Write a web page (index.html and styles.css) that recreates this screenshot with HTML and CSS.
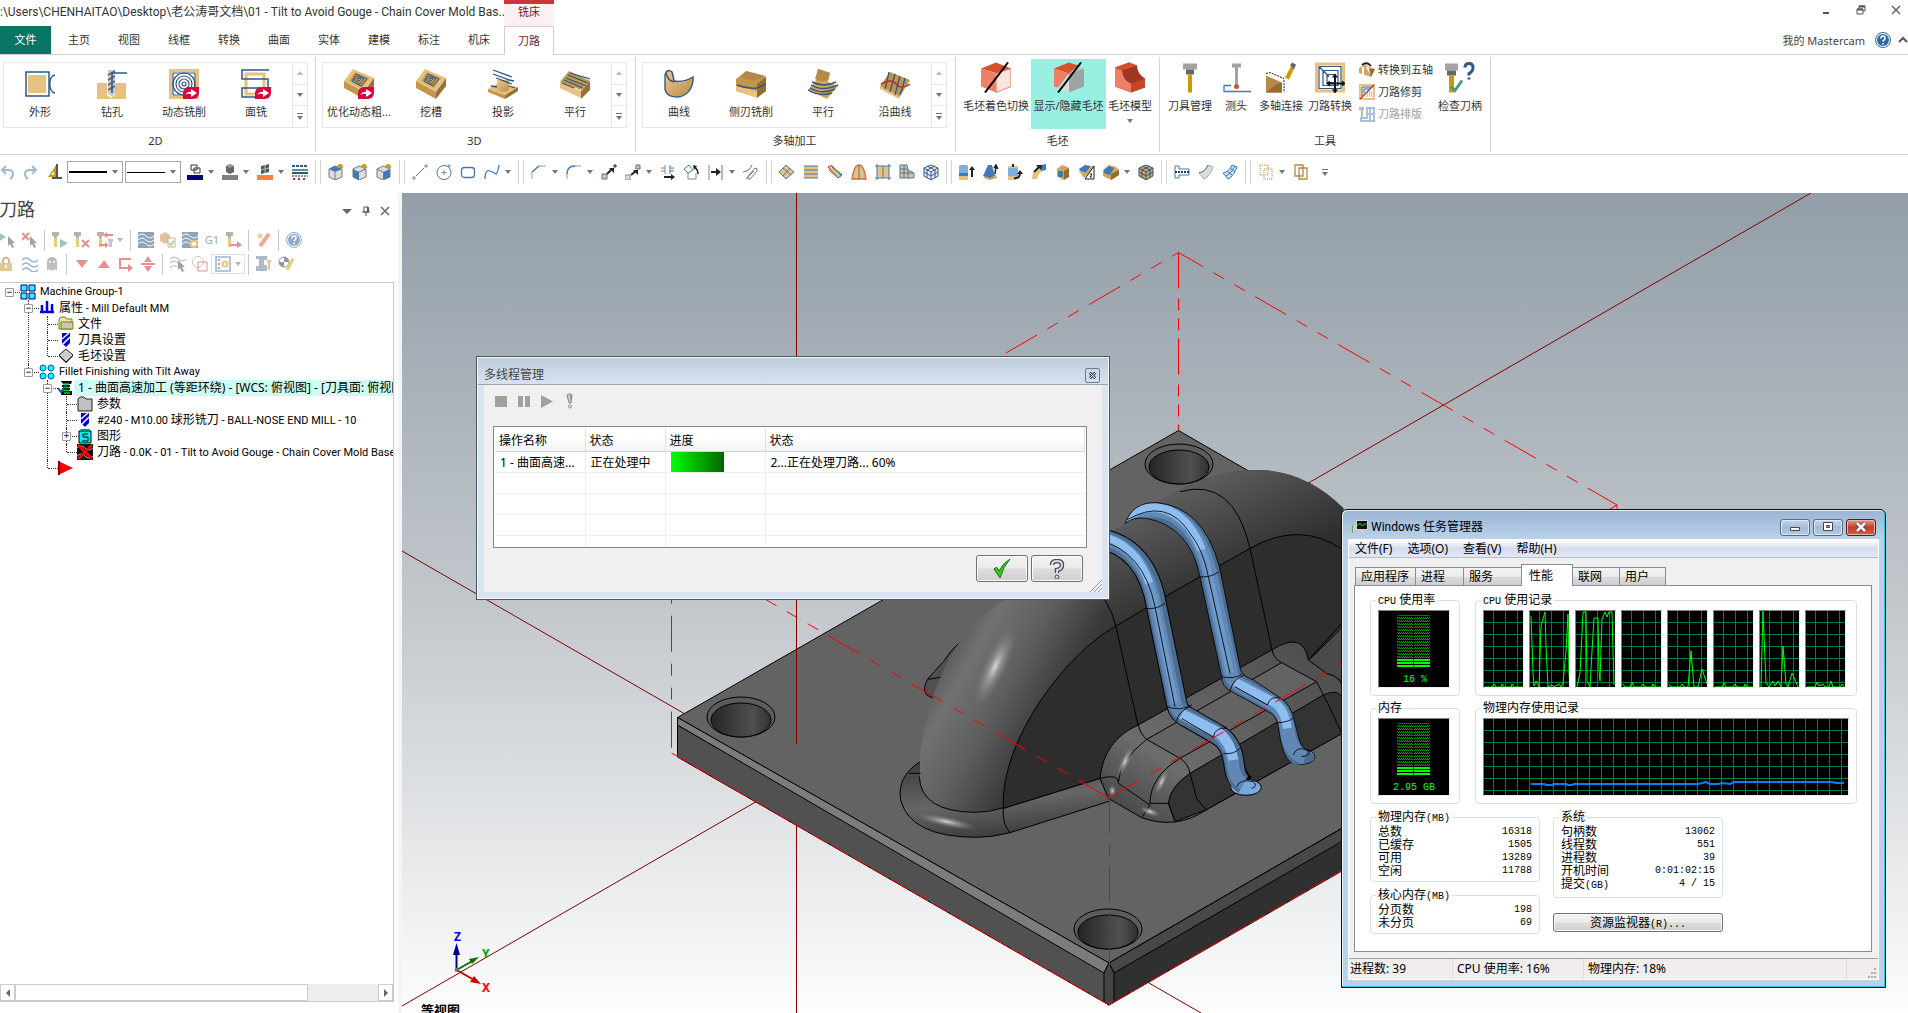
FILE: index.html
```html
<!DOCTYPE html>
<html lang="zh-CN">
<head>
<meta charset="utf-8">
<title>Mastercam</title>
<link rel="stylesheet" href="styles.css">
</head>
<body>
<svg class="defs" aria-hidden="true">
<defs>
<linearGradient id="gTan" x1="0" y1="0" x2="1" y2="1"><stop offset="0" stop-color="#f0c987"/><stop offset="1" stop-color="#b98d4a"/></linearGradient>
<!-- large ribbon icons, 30 x 30 -->
<symbol id="b-contour" viewBox="0 0 30 30"><path d="M1 3h23v24H1z" fill="#fff" stroke="#2f5882" stroke-width="1.5"/><path d="M3 6h18v18H3z" fill="#e8c080"/><path d="M30 6c-7 1-7 17 0 18" fill="none" stroke="#2f5882" stroke-width="1.5"/></symbol>
<symbol id="b-drill" viewBox="0 0 30 30"><path d="M0 14h10v12l4 3 4-3V14h11v16H0z" fill="#e8c080"/><path d="M11 1h7v23l-3 4-4-4z" fill="#c9c9c9"/><path d="M11 6l7-4M11 11l7-4M11 16l7-4M11 21l7-4" stroke="#666" stroke-width="2"/><path d="M30 4H15v20" fill="none" stroke="#2f5882" stroke-width="1.5"/></symbol>
<symbol id="go" viewBox="0 0 16 12"><path d="M0 6a6 6 0 0 1 6-6h10v6a6 6 0 0 1-6 6H0z" fill="#d9083c"/><path d="M2 8q3-4 6-3V2l6 4-6 4V7Q5 6 2 8z" fill="#fff"/></symbol>
<symbol id="b-dyn" viewBox="0 0 30 30"><path d="M0 0h30v30H0z" fill="#e8c080"/><path d="M3 3h24v24H3z" fill="#fff"/><g fill="none" stroke="#2f5882" stroke-width="1.2"><circle cx="15" cy="15" r="2"/><circle cx="15" cy="15" r="5"/><circle cx="15" cy="15" r="8"/><circle cx="15" cy="15" r="11"/><path d="M4 4h22v22H4z"/></g><use href="#go" x="14" y="18" width="16" height="12"/></symbol>
<symbol id="b-face" viewBox="0 0 30 30"><path d="M5 5h18v20H5z" fill="none" stroke="#e8c080" stroke-width="3"/><path d="M28 1H1v9h26v9H1v9h15" fill="none" stroke="#2f5882" stroke-width="1.5"/><use href="#go" x="14" y="18" width="16" height="12"/></symbol>
<symbol id="b-pocket" viewBox="0 0 30 30"><path d="M9 0l21 9-10 14L0 12z" fill="#e8c080"/><path d="M0 12l20 11v7L0 19z" fill="#c4954c"/><path d="M30 9v8L20 30v-7z" fill="#9a7135"/><path d="M11 3l14 6-7 10L5 12z" fill="#c99d57"/><g fill="none" stroke="#2f5882"><path d="M12 5l11 5-6 7-9-5z"/><path d="M13 7l7 3-4 5-6-4z"/><path d="M14 9l3 1-2 2-2-1z"/></g></symbol>
<symbol id="b-opti" viewBox="0 0 30 30"><use href="#b-pocket" width="30" height="30"/><use href="#go" x="14" y="18" width="16" height="12"/></symbol>
<symbol id="b-proj" viewBox="0 0 30 30"><path d="M0 20l10-6 20 4-13 8z" fill="#e8c080"/><path d="M0 20l17 6v4L0 23z" fill="#c4954c"/><path d="M17 26l13-8v4l-13 8z" fill="#9a7135"/><path d="M9 11v10q6 4 12 0V11z" fill="url(#gTan)"/><path d="M5 1l19 7M5 5l19 7M8 9l16 6M21 11l5 1M9 18l-6-1M21 17l6 2" stroke="#2f5882" stroke-width="1.3"/></symbol>
<symbol id="b-par" viewBox="0 0 30 30"><path d="M9 2l21 10-9 9L0 13z" fill="#c4954c"/><path d="M0 13l21 9v7L0 19z" fill="#e8c080"/><path d="M30 12v9l-9 9v-8z" fill="#9a7135"/><path d="M10 4l20 6M8 6l20 8M6 9l20 8M4 11l19 8M2 14l12 5" stroke="#2f5882" stroke-width="1.3"/></symbol>
<symbol id="b-curve" viewBox="0 0 30 30"><path d="M2 3Q8-1 10 6l1 7q8 2 18-5Q30 24 16 27 3 29 1 20z" fill="url(#gTan)"/><path d="M1 20V6Q3-1 8 3l2 9q9 2 19-4v4Q27 26 14 28 2 28 1 20M2 4q2 8 8 9" fill="none" stroke="#2f5882" stroke-width="1.4"/></symbol>
<symbol id="b-swarf" viewBox="0 0 30 30"><path d="M10 2l20 6v14l-9 6L0 22V10z" fill="#c4954c"/><path d="M0 17l21 5v7L0 22z" fill="#e8c080"/><path d="M21 15l9-7v14l-9 7z" fill="#946b30"/><path d="M5 8q10 6 20 1l5-2-20-5z" fill="#b48848"/><path d="M1 16q12 4 20 3l9-4" fill="none" stroke="#2f5882" stroke-width="1.5"/></symbol>
<symbol id="b-mpar" viewBox="0 0 30 30"><path d="M10 0q8 2 12 4l-2 9 10 4-11 13L0 21l9-11z" fill="#d1a460"/><path d="M10 0l12 4-2 7q-7 3-13-1z" fill="#b58a49"/><path d="M4 13q12 6 24 0M3 16q12 7 27 0M2 19q12 7 25 1M0 21q12 7 24 3" fill="none" stroke="#2f5882" stroke-width="1.4"/></symbol>
<symbol id="b-along" viewBox="0 0 30 30"><path d="M10 3l20 8-11 18L0 17z" fill="#bf9250"/><path d="M0 17l19 10v3L0 20z" fill="#e8c080"/><path d="M9 3q-2 10-4 17M15 5q-3 10-5 18M20 7q-3 11-5 19M25 9q-2 10-5 17" fill="none" stroke="#2f5882" stroke-width="1.3"/><path d="M1 15q10-6 15 0t14 0" fill="none" stroke="#b4342b" stroke-width="1.5"/></symbol>
<symbol id="b-shade" viewBox="0 0 30 30"><path d="M0 6l15-6 15 6-14 5z" fill="#d9502d"/><path d="M0 6l15 5v19L0 24z" fill="#f08065"/><path d="M15 11l15-5v18l-15 6z" fill="#fce4de" stroke="#f08065"/><path d="M4 30L27 0" stroke="#000" stroke-width="2"/></symbol>
<symbol id="b-show" viewBox="0 0 30 30"><path d="M0 6l15-6 15 6-14 5z" fill="#c5cad0"/><path d="M0 6l15-6 9 3-9 8z" fill="#d9502d"/><path d="M0 6l15 5-11 14-4-1z" fill="#f08065"/><path d="M15 11l15-5v18l-15 6z" fill="#a0a3a6"/><path d="M15 12v18l-10-4z" fill="#dcdcdc"/><path d="M4 30L27 0" stroke="#000" stroke-width="2"/></symbol>
<symbol id="b-model" viewBox="0 0 30 30"><path d="M0 5L14 0l8 3q0 8 8 13v9l-14 5L0 24z" fill="#9e3720"/><path d="M0 5l7 3q1 10 9 13v9L0 24z" fill="#f08065"/><path d="M0 5L14 0l8 3-15 5z" fill="#d9502d"/><path d="M16 21l14-5v9l-14 5z" fill="#c4452a"/></symbol>
<symbol id="b-tool" viewBox="0 0 30 30"><path d="M8 1h14v6H8z" fill="#a3a3a3"/><path d="M11 7h8v5h-8z" fill="#666"/><path d="M13 12h4v18h-4z" fill="#cc9900"/></symbol>
<symbol id="b-probe" viewBox="0 0 30 30"><path d="M11 1h9v4h-3v17h-3V5h-3z" fill="#a3a3a3"/><circle cx="15.500" cy="24" r="2.500" fill="#d9502d"/><path d="M10 23H3v6h27" fill="none" stroke="#3f7bb5" stroke-width="1.3"/></symbol>
<symbol id="b-multi" viewBox="0 0 30 30"><path d="M0 13l16 7v10H0z" fill="#b58a49"/><path d="M0 30l10-8 6-2v10z" fill="#946b30"/><path d="M0 11l4-1 14 6v14" fill="none" stroke="#222" stroke-dasharray="2 1"/><path d="M19 15l6-11 3 2-5 11z" fill="#cc9900"/><path d="M24 3l2-3 4 2-2 5z" fill="#666"/></symbol>
<symbol id="b-trans" viewBox="0 0 30 30"><path d="M0 0h30v30H0z" fill="#e8c080"/><path d="M3 3h24v24H3z" fill="#fff"/><g fill="none" stroke="#2f5882" stroke-width="1.2"><path d="M4 4h22v22H4zM8 8h15v15H8zM12 12h8v8h-8zM4 4l10 10"/></g><path d="M20 13v16M13 21h16" stroke="#111" stroke-width="2"/><path d="M20 11l3 4h-6zM20 31l3-4h-6zM11 21l4-3v6zM31 21l-4-3v6z" fill="#111"/></symbol>
<symbol id="b-check" viewBox="0 0 30 30"><path d="M0 1h13v7H0z" fill="#a3a3a3"/><path d="M2 8h9v5H2z" fill="#666"/><path d="M4 13h5v17H4z" fill="#cc9900"/><path d="M6 24l4 4 7-10" fill="none" stroke="#4b9a7d" stroke-width="3"/><path d="M20 5q0-4 4-4t4 4-4 6v2M24 15v2" fill="none" stroke="#2f5882" stroke-width="3"/></symbol>
<!-- small icons, 16 x 16 -->
<symbol id="s-five" viewBox="0 0 16 16"><path d="M0 6l6-3 10 4-4 8-12-4z" fill="#d1a460"/><path d="M3 3q5-4 9 1" fill="none" stroke="#222" stroke-width="2"/><path d="M4 5v8M8 5l4 7" stroke="#fff" stroke-width="2"/><path d="M10 7l6 0-4 8z" fill="#946b30"/></symbol>
<symbol id="s-trim" viewBox="0 0 16 16"><path d="M0 0h16v16H0z" fill="#e8c080"/><path d="M2 2h12v12H2z" fill="#fff"/><path d="M3 12V3h10M5 9V5h5" fill="none" stroke="#2f5882"/><path d="M6 12h7M8 10h5M10 8h3" stroke="#888" stroke-dasharray="1 1"/><path d="M1 15L15 1" stroke="#b4342b" stroke-width="1.500"/></symbol>
<symbol id="s-nest" viewBox="0 0 16 16"><path d="M0 1h5v3H4v7H2V4H0z" fill="#bbb"/><path d="M8 2h7v13H2v-3h6zM8 8h7M11 3v11" fill="none" stroke="#a9c1dc" stroke-width="2"/></symbol>
<symbol id="undo" viewBox="0 0 16 16"><path d="M3 6h6q5 0 5 4 0 3-3 5M7 2L3 6l4 4" fill="none" stroke="#9cbbd9" stroke-width="2"/></symbol>
<symbol id="redo" viewBox="0 0 16 16"><path d="M13 6H7q-5 0-5 4 0 3 3 5M9 2l4 4-4 4" fill="none" stroke="#9cbbd9" stroke-width="2"/></symbol>
<symbol id="tri" viewBox="0 0 16 16"><path d="M9 1v12H1zM7 7v4H4z" fill="#c99a12" fill-rule="evenodd"/><path d="M10 0v13M5 14h10" stroke="#555" stroke-width="2"/></symbol>
<symbol id="c1" viewBox="0 0 16 16"><path d="M4 1h6v5H4zM7 4h6v5H7z" fill="none" stroke="#333"/><path d="M0 11h16v5H0z" fill="#000080"/></symbol>
<symbol id="c2" viewBox="0 0 16 16"><path d="M4 2l4-2 4 2v6l-4 2-4-2z" fill="#666"/><path d="M4 2l4 2 4-2-4-2z" fill="#999"/><path d="M0 11h16v5H0z" fill="#808080"/></symbol>
<symbol id="c3" viewBox="0 0 16 16"><path d="M4 2l8-2v8l-8 2z" fill="#555"/><path d="M8 1v8M4 6l8-2" stroke="#bbb"/><path d="M0 11h16v5H0z" fill="#ff8040"/></symbol>
<symbol id="mesh" viewBox="0 0 16 16"><path d="M0 2h16" stroke="#2f5882" stroke-width="2" stroke-dasharray="3 1"/><path d="M0 6h16" stroke="#4b9a7d" stroke-width="2"/><path d="M0 9h16" stroke="#2f5882" stroke-width="2"/><path d="M0 12h16" stroke="#222" stroke-dasharray="2 1"/><path d="M1 15h14" stroke="#b4342b" stroke-width="2" stroke-dasharray="2 3"/></symbol>
<symbol id="cubeT" viewBox="0 0 16 16"><path d="M1 5l6-3 7 3v8l-7 3-6-3z" fill="#ddd" stroke="#777"/><path d="M1 5l6-3 7 3-7 3z" fill="#3f7bb5"/><path d="M7 8v8" stroke="#777"/><path d="M9 4q0-4 3-4t3 4z" fill="#c99a12"/></symbol>
<symbol id="cubeL" viewBox="0 0 16 16"><path d="M1 5l6-3 7 3v8l-7 3-6-3z" fill="#ddd" stroke="#777"/><path d="M1 5l6 3v8l-6-3z" fill="#3f7bb5"/><path d="M7 8l7-3" stroke="#777"/><path d="M9 4q0-4 3-4t3 4z" fill="#c99a12"/></symbol>
<symbol id="cubeR" viewBox="0 0 16 16"><path d="M1 5l6-3 7 3v8l-7 3-6-3z" fill="#ddd" stroke="#777"/><path d="M7 8l7-3v8l-7 3z" fill="#3f7bb5"/><path d="M7 8L1 5" stroke="#777"/><path d="M9 4q0-4 3-4t3 4z" fill="#c99a12"/></symbol>
<symbol id="line" viewBox="0 0 16 16"><path d="M4 12L12 4" stroke="#3f7bb5"/><path d="M2 12v4M0 14h4M14 0v4M12 2h4" stroke="#888"/></symbol>
<symbol id="circ" viewBox="0 0 16 16"><circle cx="8" cy="8.500" r="7" fill="none" stroke="#3f7bb5"/><path d="M8 6v5M5.500 8.500h5M13 0v4M11 2h4" stroke="#888"/></symbol>
<symbol id="rect" viewBox="0 0 16 16"><rect x="1.500" y="3.500" width="13" height="10" rx="3" fill="none" stroke="#3f7bb5" stroke-width="1.300"/></symbol>
<symbol id="spl" viewBox="0 0 16 16"><path d="M1 15Q1 5 6 7t6 3q2-2 3-9" fill="none" stroke="#3f7bb5" stroke-width="1.300"/></symbol>
<symbol id="cham" viewBox="0 0 16 16"><path d="M1 15V8l7-6h7" fill="none" stroke="#999"/><path d="M1 8l7-6" stroke="#3f7bb5" stroke-width="1.300"/></symbol>
<symbol id="fil" viewBox="0 0 16 16"><path d="M1 15v-5q0-8 8-8h6" fill="none" stroke="#999"/><path d="M1 10q0-8 8-8" fill="none" stroke="#3f7bb5" stroke-width="1.300"/></symbol>
<symbol id="mv1" viewBox="0 0 16 16"><path d="M1 10h5v5H1z" fill="#e8c080" stroke="#3f7bb5"/><path d="M6 10l5-5" stroke="#222" stroke-width="2"/><path d="M8 4h5v5z" fill="#222"/><path d="M14 0v4M12 2h4" stroke="#222"/></symbol>
<symbol id="mv2" viewBox="0 0 16 16"><path d="M0 11h5v5H0z" fill="#ddd" stroke="#888"/><path d="M6 11l5-4" stroke="#222" stroke-width="2"/><path d="M8 6h5v5z" fill="#222"/><path d="M11 1h4v4h-4z" fill="#e8c080" stroke="#3f7bb5"/></symbol>
<symbol id="off" viewBox="0 0 16 16"><path d="M5 1v9M1 4h4M1 7h4" stroke="#888" fill="none"/><path d="M10 1v9M10 4h4M10 7h4" stroke="#3f7bb5"/><path d="M4 13h8" stroke="#222" stroke-width="2"/><path d="M11 10l4 3-4 3z" fill="#222"/></symbol>
<symbol id="rot" viewBox="0 0 16 16"><path d="M0 5l5-4 4 5-5 3z" fill="none" stroke="#3f7bb5"/><path d="M4 9v6h8V9" fill="none" stroke="#888"/><path d="M10 3q4 2 4 7" fill="none" stroke="#222" stroke-width="1.500"/><path d="M9 1l4 1-3 4z" fill="#222"/></symbol>
<symbol id="ext" viewBox="0 0 16 16"><path d="M1 1v15" stroke="#888"/><path d="M14 1v15" stroke="#3f7bb5"/><path d="M3 8h6" stroke="#222" stroke-width="2"/><path d="M8 4l5 4-5 4z" fill="#222"/></symbol>
<symbol id="clip" viewBox="0 0 16 16"><path d="M0 8q7-1 9-7" fill="none" stroke="#3f7bb5"/><path d="M3 15l9-11q3 0 2 3l-7 8q-3 1-2-2l6-6" fill="none" stroke="#777"/></symbol>
<symbol id="p1" viewBox="0 0 16 16"><path d="M7 1l8 7-8 7-7-7z" fill="#e8c080" stroke="#3f7bb5"/><path d="M4 4l8 7M11 4l-7 8" stroke="#3f7bb5"/></symbol>
<symbol id="p2" viewBox="0 0 16 16"><path d="M1 2h14v12H1z" fill="#e8c080"/><path d="M1 2h14M1 6h14M1 10h14M1 14h14" stroke="#3f7bb5"/></symbol>
<symbol id="p3" viewBox="0 0 16 16"><path d="M1 3q4-3 6 1l8 7-4 3z" fill="#e8c080" stroke="#b4342b"/><path d="M2 6l9 8M5 3l9 8" stroke="#3f7bb5"/></symbol>
<symbol id="p4" viewBox="0 0 16 16"><path d="M1 15Q3 1 8 1t7 14z" fill="#e8c080" stroke="#d9663d" stroke-width="1.300"/><path d="M8 1v14" stroke="#3f7bb5"/></symbol>
<symbol id="p5" viewBox="0 0 16 16"><path d="M2 2h12v12H2z" fill="#e8c080"/><path d="M2 0v16M14 0v16M0 2h16M0 14h16M8 2v12" stroke="#3f7bb5"/></symbol>
<symbol id="p6" viewBox="0 0 16 16"><path d="M1 1h7l1 5 6 3v5H1z" fill="#e8c080" stroke="#3f7bb5"/><path d="M1 5h8M1 9h13M5 1v13M9 6v8" stroke="#3f7bb5"/></symbol>
<symbol id="p7" viewBox="0 0 16 16"><path d="M1 4l7-3 7 3v8l-7 4-7-4z" fill="#eef" stroke="#2f5882"/><path d="M1 4l7 4 7-4M8 8v8M4 2l8 4v8M12 2L4 6v8M1 8l7 4 7-4" fill="none" stroke="#2f5882"/></symbol>
<symbol id="t1" viewBox="0 0 16 16"><path d="M0 2q5-2 9 0v13H0z" fill="#3f7bb5"/><path d="M0 2q5-2 9 0v7H0z" fill="#7fb0e0"/><path d="M0 12h9v4H0z" fill="#e8c080"/><path d="M13 5v8" stroke="#222" stroke-width="2"/><path d="M10 6l3-4 3 4z" fill="#222"/></symbol>
<symbol id="t2" viewBox="0 0 16 16"><path d="M5 1h4l3 11-6 3-6-3z" fill="#3f7bb5"/><path d="M1 12l6 2 6-3 1 3-7 2-6-2z" fill="#d1a460"/><path d="M12 10l1-8M11 4l2-3 2 4" stroke="#222" stroke-width="1.500"/></symbol>
<symbol id="t3" viewBox="0 0 16 16"><path d="M1 3h10v11H1z" fill="#7fb0e0"/><path d="M1 12h8v4H1zM1 2h10v2H1z" fill="#e8c080"/><path d="M6 0v3M7 14q6 1 6-5" fill="none" stroke="#222" stroke-width="2"/><path d="M10 10l3-4 3 4z" fill="#222"/></symbol>
<symbol id="t4" viewBox="0 0 16 16"><path d="M1 15q0-9 8-11l3 3q-5 2-6 8z" fill="#e8c080"/><path d="M10 1l5-1v6l-5 1z" fill="#3f7bb5"/><path d="M3 8l5-5" fill="none" stroke="#222" stroke-width="2"/><path d="M5 1l6 0-1 5z" fill="#222"/></symbol>
<symbol id="t5" viewBox="0 0 16 16"><path d="M2 5l5-4 6 2 1 9-6 4-6-4z" fill="#d1a460"/><path d="M9 7l5-3v9l-5 3z" fill="#946b30"/><path d="M3 7h5v6H3z" fill="#3f7bb5"/></symbol>
<symbol id="t6" viewBox="0 0 16 16"><path d="M0 5l6-4 6 1-5 7-6-2z" fill="#3f7bb5"/><path d="M0 7l6 2 8-8v4L5 14z" fill="#d1a460"/><path d="M15 2v13H6z" fill="#fff" stroke="#222"/><path d="M11 10h2l-2 3h2" fill="none" stroke="#222"/></symbol>
<symbol id="t7" viewBox="0 0 16 16"><path d="M0 6l6-5 7 2 3 3v5l-8 5-8-4z" fill="#d1a460"/><path d="M1 6l5-4 5 2-4 7-6-2z" fill="#3f7bb5"/><path d="M8 10l8-4v5l-8 5z" fill="#946b30"/></symbol>
<symbol id="t8" viewBox="0 0 16 16"><path d="M1 4l7-3 7 3v8l-7 4-7-4z" fill="#d1a460" stroke="#2f5882"/><path d="M1 4l7 4 7-4M8 8v8M4 2l8 4v8M12 2L4 6v8M1 8l7 4 7-4" fill="none" stroke="#2f5882"/></symbol>
<symbol id="m1" viewBox="0 0 16 16"><path d="M1 2v12h4v-3h10V5H5V2z" fill="#fff" stroke="#3f7bb5"/><path d="M1 8h14" stroke="#333" stroke-width="2" stroke-dasharray="2 1"/></symbol>
<symbol id="m2" viewBox="0 0 16 16"><path d="M1 9q6-1 9-8l5 2q-3 9-9 12z" fill="#ddd" stroke="#aaa"/><path d="M1 9q6-1 9-8" fill="none" stroke="#3f7bb5"/></symbol>
<symbol id="m3" viewBox="0 0 16 16"><path d="M1 9q6-1 9-8l5 2q-3 9-9 12z" fill="#cfe1f4" stroke="#3f7bb5"/><path d="M4 12q6-3 9-10M5 7l5 4M8 4l5 4" fill="none" stroke="#3f7bb5"/></symbol>
<symbol id="g1" viewBox="0 0 16 16"><path d="M2 1h8v10H2zM6 5h8v10H6z" fill="none" stroke="#b58a49" stroke-dasharray="1 1"/></symbol>
<symbol id="g2" viewBox="0 0 16 16"><path d="M2 1h8v11H2zM6 4h8v11H6z" fill="none" stroke="#b58a49" stroke-width="1.300"/></symbol>
<!-- panel toolbar -->
<symbol id="cur" viewBox="0 0 16 16"><path d="M8 4v10l2-2 2 4 2-1-2-4h3z" fill="#555"/></symbol>
<symbol id="n1" viewBox="0 0 16 16"><path d="M-2 0l8 5-8 5z" fill="#4b9a7d"/><use href="#cur" width="16" height="16"/></symbol>
<symbol id="n2" viewBox="0 0 16 16"><path d="M0 1l7 7M7 1L0 8" stroke="#d33" stroke-width="2"/><use href="#cur" width="16" height="16"/></symbol>
<symbol id="tl" viewBox="0 0 16 16"><path d="M0 0h7v4H5v2H2V4H0z" fill="#777"/><path d="M2 6h3v9H2z" fill="#d9a400"/></symbol>
<symbol id="n3" viewBox="0 0 16 16"><use href="#tl" width="16" height="16"/><path d="M8 7l8 4-8 5z" fill="#4b9a7d"/></symbol>
<symbol id="n4" viewBox="0 0 16 16"><use href="#tl" width="16" height="16"/><path d="M8 8l7 7M15 8l-7 7" stroke="#d33" stroke-width="2"/></symbol>
<symbol id="n5" viewBox="0 0 16 16"><use href="#tl" width="16" height="16"/><path d="M16 3H8M2 13h7" stroke="#d33" stroke-width="2"/><path d="M6 3l4-3v6zM12 13L8 10v6z" fill="#d33"/><path d="M11 7h5v3h-1v5h-3v-5h-1z" fill="#999"/></symbol>
<symbol id="n6" viewBox="0 0 16 16"><path d="M0 0h16v16H0z" fill="#2f5882"/><path d="M0 4q4-4 8 0t8 0M0 8q4-4 8 0t8 0M0 12q4-4 8 0t8 0" fill="none" stroke="#fff"/></symbol>
<symbol id="n7" viewBox="0 0 16 16"><path d="M0 3l5-3 5 3v6l-5 3-5-3z" fill="#c4954c"/><path d="M8 6h7v9H8z" fill="#fff" stroke="#a56a2c"/><path d="M9 11l2 2 3-4" fill="none" stroke="#4b9a7d" stroke-width="1.500"/></symbol>
<symbol id="n8" viewBox="0 0 16 16"><use href="#n6" width="16" height="16"/><circle cx="12" cy="12" r="3" fill="#fff" stroke="#d39a20" stroke-width="2"/></symbol>
<symbol id="n10" viewBox="0 0 16 16"><use href="#tl" width="16" height="16"/><path d="M4 13h9" stroke="#d33" stroke-width="2"/><path d="M11 9l5 4-5 3z" fill="#d33"/></symbol>
<symbol id="n11" viewBox="0 0 16 16"><path d="M13 2L4 14" stroke="#d9663d" stroke-width="4"/><path d="M1 4h6M4 1v6M2 2l4 4M6 2L2 6" stroke="#d9a400"/></symbol>
<symbol id="help" viewBox="0 0 16 16"><circle cx="8" cy="8" r="7.500" fill="#fff" stroke="#2f66a5"/><circle cx="8" cy="8" r="6" fill="#2f66a5"/><path d="M6 6.500q0-2.500 2-2.500t2 2-2 3v.5M8 11v1.500" fill="none" stroke="#fff" stroke-width="1.500"/></symbol>
<symbol id="k1" viewBox="0 0 16 16"><path d="M3 7V4q3-5 6 0v3" fill="none" stroke="#a87c30" stroke-width="2"/><path d="M0 7h12v8H0z" fill="#c99a3c"/><path d="M6 9v3" stroke="#fff" stroke-width="2"/></symbol>
<symbol id="k2" viewBox="0 0 16 16"><path d="M0 4q4-4 8 0t8 0M0 9q4-4 8 0t8 0M0 14q4-4 8 0t8 0" fill="none" stroke="#3f7bb5" stroke-width="1.500"/></symbol>
<symbol id="k3" viewBox="0 0 16 16"><path d="M3 15V6q0-5 5-5t5 5v9l-2-2-2 2-1-2-1 2-2-2z" fill="#888"/><path d="M6 5v2M10 5v2" stroke="#fff" stroke-width="1.500"/></symbol>
<symbol id="k4" viewBox="0 0 16 16"><path d="M2 4h12l-6 8z" fill="#d33"/></symbol>
<symbol id="k5" viewBox="0 0 16 16"><path d="M2 12h12L8 4z" fill="#d33"/></symbol>
<symbol id="k6" viewBox="0 0 16 16"><path d="M13 3H2v9h9" fill="none" stroke="#d33" stroke-width="2"/><path d="M10 8l5 4-5 4z" fill="#d33"/></symbol>
<symbol id="k7" viewBox="0 0 16 16"><path d="M1 8h14" stroke="#d33" stroke-width="2"/><path d="M4 6h8L8 0zM4 10h8l-4 6z" fill="#d33"/></symbol>
<symbol id="k8" viewBox="0 0 16 16"><path d="M0 3q4-4 8 0t8 0M0 7q4-4 8 0M0 12q3-4 7-1" fill="none" stroke="#678"/><use href="#cur" width="16" height="16"/></symbol>
<symbol id="k9" viewBox="0 0 16 16"><circle cx="6" cy="6" r="5.500" fill="none" stroke="#999"/><path d="M6 6h9v9H6z" fill="none" stroke="#d33"/></symbol>
<symbol id="k10" viewBox="0 0 16 16"><path d="M1 1h14v14H1z" fill="#fff" stroke="#3f7bb5" stroke-width="1.500"/><path d="M4 3v2M4 7v2M4 11v2" stroke="#d33" stroke-width="2"/><circle cx="10" cy="8" r="2.500" fill="none" stroke="#d39a20" stroke-width="2"/></symbol>
<symbol id="k11" viewBox="0 0 16 16"><path d="M0 0h11v4H8v5h3v6H0v-5h3V3H0z" fill="#6c8197"/><path d="M11 4h4v3h-1v7h-2V7h-1z" fill="#c99a3c"/></symbol>
<symbol id="k12" viewBox="0 0 16 16"><circle cx="6" cy="6" r="5" fill="#fff" stroke="#444"/><path d="M6 6V1a5 5 0 0 1 5 5zM6 6v5a5 5 0 0 1-5-5z" fill="#444"/><path d="M15 3L9 14" stroke="#d9a400" stroke-width="3"/></symbol>
<!-- tree -->
<symbol id="r-mg" viewBox="0 0 16 16"><path d="M1 1h6v6H1zM9 1h6v6H9zM1 9h6v6H1zM9 9h6v6H9z" fill="#3ef" stroke="#000080"/></symbol>
<symbol id="r-prop" viewBox="0 0 16 16"><path d="M1 12h14M3 5v7M8 1v11M13 4v8" stroke="#0000e0" stroke-width="2.500"/></symbol>
<symbol id="r-file" viewBox="0 0 16 16"><path d="M1 13V3l2-2h4l2 2h5v10z" fill="#e4e4b4" stroke="#808000"/><path d="M3 6h12v7H3z" fill="#c8c8b8" stroke="#808000"/></symbol>
<symbol id="r-tool" viewBox="0 0 16 16"><path d="M4 1h8v10l-4 4-4-4z" fill="#0000d0"/><path d="M4 7l7-6M5 12l7-7" stroke="#fff" stroke-width="1.500"/></symbol>
<symbol id="r-stock" viewBox="0 0 16 16"><path d="M8 1l7 6-7 7-7-7z" fill="#ccc" stroke="#222"/><path d="M1 8l7 7 7-7" fill="none" stroke="#666"/></symbol>
<symbol id="r-tg" viewBox="0 0 16 16"><g fill="#0ff" stroke="#0050c0"><circle cx="4" cy="4" r="3"/><circle cx="12" cy="4" r="3"/><circle cx="4" cy="12" r="3"/><circle cx="12" cy="12" r="3"/></g></symbol>
<symbol id="r-op" viewBox="0 0 16 16"><path d="M3 1h11l-1 3H5zM4 5h8v2H4zM4 8h8v2H4zM4 11h10v4H3z" fill="#000"/><path d="M5 4h6M5 7.500h6M5 10.500h6M6 13h6" stroke="#0c3" stroke-width="1.500"/><path d="M0 8l3 4 5-7" fill="none" stroke="#068" stroke-width="2"/></symbol>
<symbol id="r-par" viewBox="0 0 16 16"><path d="M1 15V3l2-2h4l2 2h6v12z" fill="#c0c0c0" stroke="#222"/></symbol>
<symbol id="r-geo" viewBox="0 0 16 16"><path d="M2 3h12v12H2z" fill="#0ee" stroke="#000"/><path d="M4 1h8l2 2H2z" fill="#088"/><path d="M11 6H6v3h5v4H5" fill="none" stroke="#000"/></symbol>
<symbol id="r-tp" viewBox="0 0 16 16"><path d="M0 0h16v16H0z" fill="#111"/><path d="M0 4q4-4 8 0t8 0M0 12q4-4 8 0t8 0" fill="none" stroke="#aaa"/><path d="M1 1l14 14M15 1L1 15" stroke="#f00" stroke-width="2.500"/></symbol>
<symbol id="r-arrow" viewBox="0 0 16 16"><path d="M0 1l15 7-15 7z" fill="#f00"/><path d="M0 1v14h2V1z" fill="#800000"/></symbol>
<!-- task manager -->
<pattern id="grid" width="12" height="12" patternUnits="userSpaceOnUse"><path d="M9.500 0v12M0 11.500h12" stroke="#008040"/></pattern>
<pattern id="dots" width="2" height="3" patternUnits="userSpaceOnUse"><path d="M0 0h1v1H0zM1 1h1v1H1z" fill="#00a000"/></pattern>
<pattern id="bars" width="16" height="3" patternUnits="userSpaceOnUse"><path d="M0 0h16v2H0z" fill="#0f0"/></pattern>
</defs>
</svg>

<header class="titlebar">
  <h1 class="doc">:\Users\CHENHAITAO\Desktop\老公涛哥文档\01 - Tilt to Avoid Gouge - Chain Cover Mold Bas...</h1>
  <span class="context">铣床</span>
  <div class="winbtns">
    <button aria-label="最小化"><svg viewBox="0 0 10 10"><path d="M2 8h6" stroke="#555" stroke-width="2"/></svg></button>
    <button aria-label="还原"><svg viewBox="0 0 10 10"><path d="M3 3V1h6v5H7M1 4h6v5H1z" fill="none" stroke="#555"/><path d="M3 1.500h6M1 4.500h6" stroke="#555" stroke-width="2"/></svg></button>
    <button aria-label="关闭"><svg viewBox="0 0 10 10"><path d="M1 1l8 8M9 1L1 9" stroke="#666" stroke-width="1.500"/></svg></button>
  </div>
</header>
<nav class="tabs">
  <button class="file">文件</button>
  <button>主页</button><button>视图</button><button>线框</button><button>转换</button><button>曲面</button><button>实体</button><button>建模</button><button>标注</button><button>机床</button><button class="active">刀路</button>
  <a class="my" href="#">我的 Mastercam</a>
  <button class="helpbtn" aria-label="帮助"><svg><use href="#help"/></svg></button>
  <button class="fold" aria-label="折叠"><svg viewBox="0 0 10 10"><path d="M1 7l4-4 4 4" fill="none" stroke="#555" stroke-width="2"/></svg></button>
</nav>
<section class="ribbon">
  <div class="group gal">
    <div class="gallery">
      <button><svg><use href="#b-contour"/></svg>外形</button><button><svg><use href="#b-drill"/></svg>钻孔</button><button><svg><use href="#b-dyn"/></svg>动态铣削</button><button><svg><use href="#b-face"/></svg>面铣</button>
      <div class="scroll"><button class="dim up" aria-label="上"><i class="caret"></i></button><button aria-label="下"><i class="caret"></i></button><button class="more" aria-label="更多"><i class="caret"></i></button></div>
    </div>
    <span class="cap">2D</span>
  </div>
  <div class="group gal">
    <div class="gallery">
      <button><svg><use href="#b-opti"/></svg>优化动态粗...</button><button><svg><use href="#b-pocket"/></svg>挖槽</button><button><svg><use href="#b-proj"/></svg>投影</button><button><svg><use href="#b-par"/></svg>平行</button>
      <div class="scroll"><button class="dim up" aria-label="上"><i class="caret"></i></button><button aria-label="下"><i class="caret"></i></button><button class="more" aria-label="更多"><i class="caret"></i></button></div>
    </div>
    <span class="cap">3D</span>
  </div>
  <div class="group gal">
    <div class="gallery">
      <button><svg><use href="#b-curve"/></svg>曲线</button><button><svg><use href="#b-swarf"/></svg>侧刃铣削</button><button><svg><use href="#b-mpar"/></svg>平行</button><button><svg><use href="#b-along"/></svg>沿曲线</button>
      <div class="scroll"><button class="dim up" aria-label="上"><i class="caret"></i></button><button aria-label="下"><i class="caret"></i></button><button class="more" aria-label="更多"><i class="caret"></i></button></div>
    </div>
    <span class="cap">多轴加工</span>
  </div>
  <div class="group">
    <div class="bigs">
      <button class="w70"><svg><use href="#b-shade"/></svg>毛坯着色切换</button><button class="w75 on"><svg><use href="#b-show"/></svg>显示/隐藏毛坯</button><button><svg><use href="#b-model"/></svg>毛坯模型<i class="caret"></i></button>
    </div>
    <span class="cap">毛坯</span>
  </div>
  <div class="group">
    <div class="bigs">
      <button class="w50"><svg><use href="#b-tool"/></svg>刀具管理</button><button class="w42"><svg><use href="#b-probe"/></svg>测头</button><button><svg><use href="#b-multi"/></svg>多轴连接</button><button class="w50"><svg><use href="#b-trans"/></svg>刀路转换</button>
      <div class="stack"><button><svg><use href="#s-five"/></svg>转换到五轴</button><button><svg><use href="#s-trim"/></svg>刀路修剪</button><button disabled><svg><use href="#s-nest"/></svg>刀路排版</button></div>
      <button class="w50"><svg><use href="#b-check"/></svg>检查刀柄</button>
    </div>
    <span class="cap">工具</span>
  </div>
</section>
<div class="quick">
  <button><svg><use href="#undo"/></svg></button><button><svg><use href="#redo"/></svg></button><button><svg><use href="#tri"/></svg></button>
  <button class="combo" aria-label="线宽"><i class="thick"></i><i class="caret"></i></button><button class="combo" aria-label="线型"><i class="thin"></i><i class="caret"></i></button>
  <button class="dd"><svg><use href="#c1"/></svg><i class="caret"></i></button><button class="dd"><svg><use href="#c2"/></svg><i class="caret"></i></button><button class="dd"><svg><use href="#c3"/></svg><i class="caret"></i></button><button><svg><use href="#mesh"/></svg></button><i class="dsep"></i>
  <button><svg><use href="#cubeT"/></svg></button><button><svg><use href="#cubeL"/></svg></button><button><svg><use href="#cubeR"/></svg></button><i class="dsep"></i>
  <button><svg><use href="#line"/></svg></button><button><svg><use href="#circ"/></svg></button><button><svg><use href="#rect"/></svg></button><button class="dd"><svg><use href="#spl"/></svg><i class="caret"></i></button><i class="dsep"></i>
  <button class="dd"><svg><use href="#cham"/></svg><i class="caret"></i></button><button class="dd"><svg><use href="#fil"/></svg><i class="caret"></i></button><button><svg><use href="#mv1"/></svg></button><button class="dd"><svg><use href="#mv2"/></svg><i class="caret"></i></button><button><svg><use href="#off"/></svg></button><button><svg><use href="#rot"/></svg></button><button class="dd"><svg><use href="#ext"/></svg><i class="caret"></i></button><button><svg><use href="#clip"/></svg></button><i class="dsep"></i>
  <button><svg><use href="#p1"/></svg></button><button><svg><use href="#p2"/></svg></button><button><svg><use href="#p3"/></svg></button><button><svg><use href="#p4"/></svg></button><button><svg><use href="#p5"/></svg></button><button><svg><use href="#p6"/></svg></button><button><svg><use href="#p7"/></svg></button><i class="dsep"></i>
  <button><svg><use href="#t1"/></svg></button><button><svg><use href="#t2"/></svg></button><button><svg><use href="#t3"/></svg></button><button><svg><use href="#t4"/></svg></button><button><svg><use href="#t5"/></svg></button><button><svg><use href="#t6"/></svg></button><button class="dd"><svg><use href="#t7"/></svg><i class="caret"></i></button><button><svg><use href="#t8"/></svg></button><i class="dsep"></i>
  <button><svg><use href="#m1"/></svg></button><button><svg><use href="#m2"/></svg></button><button><svg><use href="#m3"/></svg></button><i class="dsep"></i>
  <button class="dd"><svg><use href="#g1"/></svg><i class="caret"></i></button><button><svg><use href="#g2"/></svg></button><button class="more" aria-label="更多"><i class="caret"></i></button>
</div>

<main class="work">
  <aside class="panel">
    <header><h2>刀路</h2>
      <button aria-label="菜单"><svg viewBox="0 0 10 10"><path d="M0 3h10L5 8z" fill="#666"/></svg></button>
      <button aria-label="固定"><svg viewBox="0 0 10 10"><path d="M3 1h4v5H3zM1 6h8M5 6v4" fill="none" stroke="#555"/><path d="M7 1v5" stroke="#555" stroke-width="2"/></svg></button>
      <button aria-label="关闭"><svg viewBox="0 0 10 10"><path d="M1 1l8 8M9 1L1 9" stroke="#666" stroke-width="1.500"/></svg></button>
    </header>
    <div class="ptools">
      <button><svg><use href="#n1"/></svg></button><button><svg><use href="#n2"/></svg></button><i class="sep"></i><button><svg><use href="#n3"/></svg></button><button><svg><use href="#n4"/></svg></button><button class="dd"><svg><use href="#n5"/></svg><i class="caret"></i></button><i class="sep"></i><button><svg><use href="#n6"/></svg></button><button><svg><use href="#n7"/></svg></button><button><svg><use href="#n8"/></svg></button><button class="gcode">G1</button><button><svg><use href="#n10"/></svg></button><i class="sep"></i><button><svg><use href="#n11"/></svg></button><i class="sep"></i><button><svg><use href="#help"/></svg></button>
    </div>
    <div class="ptools">
      <button><svg><use href="#k1"/></svg></button><button><svg><use href="#k2"/></svg></button><button><svg><use href="#k3"/></svg></button><i class="sep"></i><button><svg><use href="#k4"/></svg></button><button><svg><use href="#k5"/></svg></button><button><svg><use href="#k6"/></svg></button><button><svg><use href="#k7"/></svg></button><i class="sep"></i><button><svg><use href="#k8"/></svg></button><button><svg><use href="#k9"/></svg></button><button class="dd boxed"><svg><use href="#k10"/></svg><i class="caret"></i></button><i class="sep"></i><button><svg><use href="#k11"/></svg></button><button><svg><use href="#k12"/></svg></button>
    </div>
    <div class="treebox">
      <ul class="tree">
        <li><div class="row"><b class="ex">−</b><svg><use href="#r-mg"/></svg><span class="lat">Machine Group-1</span></div>
          <ul>
            <li><div class="row"><b class="ex">−</b><svg><use href="#r-prop"/></svg><span class="lat"><em>属性</em> - Mill Default MM</span></div>
              <ul>
                <li><div class="row leaf"><svg><use href="#r-file"/></svg><span>文件</span></div></li>
                <li><div class="row leaf"><svg><use href="#r-tool"/></svg><span>刀具设置</span></div></li>
                <li><div class="row leaf"><svg><use href="#r-stock"/></svg><span>毛坯设置</span></div></li>
              </ul></li>
            <li><div class="row"><b class="ex">−</b><svg><use href="#r-tg"/></svg><span class="lat">Fillet Finishing with Tilt Away</span></div>
              <ul>
                <li><div class="row"><b class="ex">−</b><svg><use href="#r-op"/></svg><span class="sel">1 - 曲面高速加工 (等距环绕) - [WCS: 俯视图] - [刀具面: 俯视图]</span></div>
                  <ul>
                    <li><div class="row leaf"><svg><use href="#r-par"/></svg><span>参数</span></div></li>
                    <li><div class="row leaf"><svg><use href="#r-tool"/></svg><span class="lat">#240 - M10.00 <em>球形铣刀</em> - BALL-NOSE END MILL - 10</span></div></li>
                    <li><div class="row"><b class="ex">+</b><svg><use href="#r-geo"/></svg><span>图形</span></div></li>
                    <li><div class="row leaf"><svg><use href="#r-tp"/></svg><span class="lat"><em>刀路</em> - 0.0K - 01 - Tilt to Avoid Gouge - Chain Cover Mold Base</span></div></li>
                  </ul></li>
                <li><div class="row leaf"><svg><use href="#r-arrow"/></svg></div></li>
              </ul></li>
          </ul></li>
      </ul>
      <div class="hscroll"><button aria-label="左"><svg viewBox="0 0 8 8"><path d="M6 0v8L2 4z" fill="#666"/></svg></button><i class="thumb"></i><i class="track"></i><button aria-label="右"><svg viewBox="0 0 8 8"><path d="M2 0v8l4-4z" fill="#666"/></svg></button></div>
    </div>
  </aside>

  <section class="view">
    <svg class="scene" role="img" aria-label="等视图">
      <defs>
        <linearGradient id="dome" gradientUnits="userSpaceOnUse" x1="150" y1="600" x2="620" y2="860"><stop offset="0" stop-color="#474747"/><stop offset=".25" stop-color="#717171"/><stop offset=".5" stop-color="#5e5e5e"/><stop offset=".8" stop-color="#383838"/><stop offset="1" stop-color="#303030"/></linearGradient>
        <linearGradient id="domeR" gradientUnits="userSpaceOnUse" x1="850" y1="150" x2="1000" y2="460"><stop offset="0" stop-color="#606060"/><stop offset=".4" stop-color="#4c4c4c"/><stop offset="1" stop-color="#2e2e2e"/></linearGradient>
        <linearGradient id="base" x1="0" y1="0" x2=".3" y2="1"><stop offset="0" stop-color="#3a3a3a"/><stop offset=".6" stop-color="#666"/><stop offset="1" stop-color="#404040"/></linearGradient>
        <linearGradient id="hole" x1="0" x2="1"><stop offset="0" stop-color="#252525"/><stop offset=".7" stop-color="#505050"/><stop offset="1" stop-color="#303030"/></linearGradient>
        <linearGradient id="bump" x1="0" y1="1" x2="1" y2="0"><stop offset="0" stop-color="#3c3c3c"/><stop offset=".3" stop-color="#6c6c6c"/><stop offset="1" stop-color="#4a4a4a"/></linearGradient>
        <radialGradient id="shine"><stop offset="0" stop-color="#d8d8d8"/><stop offset=".4" stop-color="#a0a0a0" stop-opacity=".7"/><stop offset="1" stop-color="#808080" stop-opacity="0"/></radialGradient>
        <clipPath id="rib"><path d="M735 250Q760 185 830 188 970 200 1018 380L1082 690Q1090 710 1120 720L1195 770Q1235 790 1245 850L1258 900Q1265 925 1290 935 1310 945 1300 960 1270 980 1235 970 1205 950 1195 860 1190 825 1165 815L1055 755Q1025 740 1025 710L960 410Q930 260 800 235 760 230 735 250z"/></clipPath>
      </defs>
      <!-- drawing units are window pixels, so the origin is moved to the view's corner -->
      <g transform="translate(-402 -193)">
        <g stroke="#800000" fill="none"><path d="M796.500 193V1013M402 551L685 714M402 1006L1811 193M1149 983L1201 1013"/></g>
        <g stroke="#000">
          <path d="M1178.500 430.500L677.500 717.500 1109 963 1500 737V616z" fill="#636363"/>
          <path d="M677.500 717.500V757L1109 1005V972L677.500 725z" fill="#515151"/>
          <path d="M677.500 717.500V725L1104 973 1109 963z" fill="#7c7c7c"/>
          <path d="M1109 963L1500 737V780L1109 1005z" fill="#303030"/>
          <path d="M1109 963L1500 737V750L1114 973z" fill="#484848"/>
          <path d="M1104 973l5-10 5 10v29l-5 3-5-3z" fill="#444"/>
          <g id="h"><ellipse cx="741" cy="717" rx="34" ry="20" fill="#5c5c5c"/><ellipse cx="741" cy="720" rx="30" ry="17" fill="url(#hole)"/></g>
          <use href="#h" x="438" y="-253"/><use href="#h" x="367" y="212"/>
        </g>
        <path d="M796.500 640V744" stroke="#800000"/>
        <g transform="translate(880 440) scale(.33333)" stroke="#000" stroke-width="3" stroke-linejoin="round">
          <path d="M190 665L145 715Q125 745 140 765L175 782 215 745Q215 650 275 595 240 590 190 665M145 718L190 710M275 600Q190 680 192 735" fill="#505050"/>
          <path d="M280 580l18-10" stroke="#79a8dc" stroke-width="7"/>
          <path d="M120 965Q50 1010 62 1080 90 1190 285 1192 340 1192 390 1178L690 1083 660 1015 370 1105 118 1010z" fill="url(#base)"/>
          <path d="M118 1015C115 860 190 560 395 470L690 290Q760 230 880 160 1010 90 1140 90 1280 95 1390 205V800L660 1015 370 1105Q130 1150 118 1015z" fill="url(#dome)" stroke="none"/>
          <path d="M660 300L735 250Q800 200 880 160 1010 90 1140 90 1280 95 1390 205V330L850 700 690 560z" fill="url(#domeR)" stroke="none"/>
          <path d="M118 1010Q122 1115 285 1117 330 1117 370 1103" fill="none"/>
          <path d="M370 1105C360 900 560 640 705 560L855 470 1110 325Q1260 240 1390 330V560L1280 665 775 860 660 1015z" fill="#2d2d2d"/>
          <path d="M675 480Q700 520 708 560L775 860M900 155Q1060 110 1110 325L1175 625M1390 545L1280 665M370 1103Q365 1150 390 1178M87 1000h35" fill="none"/>
          <path d="M1285 665L1390 560V720L1310 690z" fill="#4a4a4a" stroke="none"/>
          <path d="M660 1015Q672 900 775 855L1175 630Q1270 570 1285 660L1340 700Q1390 710 1390 760V878L978 1110Q890 1170 785 1133L685 1075z" fill="url(#bump)"/>
          <path d="M800 898L1205 668 1310 725 900 955z" fill="#636363"/>
          <path d="M865 1090Q870 1040 930 1000L1330 765Q1385 740 1390 790V878L978 1110 885 1145z" fill="#333"/>
          <path d="M775 855Q780 880 800 898M1175 625Q1180 655 1205 668M800 898Q720 960 715 1025M900 955Q810 1010 810 1090M900 955Q925 970 930 1000L950 1075 978 1110M810 1090L865 1090M660 1015Q720 1000 715 1030L810 1095 785 1133M1310 725Q1350 800 1385 880M865 1090L885 1145" fill="none"/>
          <g fill="url(#shine)" stroke="none">
            <ellipse cx="345" cy="680" rx="35" ry="130" transform="rotate(25 345 680)"/>
            <ellipse cx="200" cy="1145" rx="90" ry="16" transform="rotate(12 200 1145)"/>
            <ellipse cx="735" cy="965" rx="14" ry="50" transform="rotate(25 735 965)"/>
            <ellipse cx="845" cy="1025" rx="12" ry="40" transform="rotate(25 845 1025)"/>
            <ellipse cx="697" cy="1052" rx="12" ry="18"/>
            <ellipse cx="810" cy="1115" rx="32" ry="12" transform="rotate(20 810 1115)"/>
          </g>
          <g fill="none">
            <path d="M655 295Q800 320 830 500L890 790Q895 820 925 833L1010 882Q1055 905 1062 970 1067 1020 1100 1038" stroke-width="64"/>
            <ellipse cx="1098" cy="1042" rx="46" ry="24" fill="#79a8dc"/>
            <path d="M655 295Q800 320 830 500L890 790Q895 820 925 833L1010 882Q1055 905 1062 970 1067 1020 1090 1033" stroke="#4c6d92" stroke-width="58"/>
            <path d="M655 291Q795 320 826 500L886 790Q892 820 922 830L1010 878Q1050 905 1058 970 1063 1020 1090 1031" stroke="#6188b4" stroke-width="38"/>
            <path d="M655 291Q795 320 826 500L886 790" stroke="#6f99c9" stroke-width="20"/>
            <path d="M655 286Q770 312 808 430" stroke="#8fbdf0" stroke-width="24"/><path d="M905 822L1012 876Q1050 900 1060 960" stroke="#8fbdf0" stroke-width="30"/>
            <path d="M655 300Q790 330 825 500L885 800M795 505q35 5 60-15M862 800Q900 815 935 795M905 835L1000 892M890 845Q890 820 935 795M1000 892Q1005 860 1040 865M1030 940q30 5 50-15M1070 1040Q1080 1015 1120 1025q15 15-5 20" stroke-width="2.500"/>
          </g>
          <ellipse cx="1265" cy="950" rx="40" ry="23" fill="#79a8dc"/>
          <g fill="none" clip-path="url(#rib)">
            <path d="M700 150h640v850H700z" fill="#4c6d92" stroke="none"/>
            <path d="M730 252Q760 205 830 210 945 225 988 395L1053 700Q1058 725 1085 738L1175 788Q1215 810 1222 870 1230 940 1275 953" stroke="#6188b4" stroke-width="44"/>
            <path d="M730 252Q760 205 830 206 945 225 986 400L1050 700" stroke="#6f99c9" stroke-width="24"/>
            <path d="M735 240Q760 200 830 203 920 215 965 330M1065 726L1178 785Q1214 805 1222 865" stroke="#8fbdf0" stroke-width="26"/>
            <path d="M740 240Q860 170 930 280 970 330 985 410L1050 700M955 410q35 5 62-15M1025 710Q1065 720 1088 700M1065 740L1162 795M1050 752Q1060 715 1095 705M1162 795Q1170 765 1205 775M1192 848q30 0 50-15M1240 945Q1250 915 1285 932q10 15-20 18" stroke-width="2.500"/>
          </g>
          <path d="M735 250Q760 185 830 188 970 200 1018 380L1082 690Q1090 710 1120 720L1195 770Q1235 790 1245 850L1258 900Q1265 925 1290 935M1235 970Q1205 950 1195 860 1190 825 1165 815L1055 755Q1025 740 1025 710L960 410Q930 260 800 235 760 230 735 250" fill="none" stroke-width="2.500"/>
        </g>
        <g stroke="#f00" fill="none">
          <path d="M1178.500 252.500V430" stroke-dasharray="36 10 12 8 12 8"/>
          <path d="M1006 353L1178.500 252.500L1617 505M1109 798L671.500 545V753M1109 798L1617 505V520" stroke-dasharray="36 12 12 12 12 12"/>
          <path d="M1109.500 798V1005" stroke-dasharray="36 10 12 10"/>
          <path d="M671.500 753L1109 1005 1500 779" stroke-dasharray="20 3"/>
        </g>
        <g stroke-width="2"><path d="M456.500 970V950" stroke="#000090"/><path d="M453 955l3.500-12 3.500 12z" fill="#000090"/><path d="M456.500 970l16-9" stroke="#007000"/><path d="M479 957l-10 2 3 5z" fill="#007000"/><path d="M456.500 970l16 9" stroke="#d00000"/><path d="M481 984l-11-2 4-6z" fill="#d00000"/></g>
        <circle cx="456.500" cy="970" r="2" fill="#777"/>
        <g class="axis"><text x="454" y="941" fill="#00f">Z</text><text x="482" y="958" fill="#00a000">Y</text><text x="482" y="992" fill="#f00">X</text></g>
        <text class="vname" x="421" y="1015">等视图</text>
      </g>
    </svg>

    <div class="dlg" role="dialog" aria-label="多线程管理">
      <header><h3>多线程管理</h3><button class="x" aria-label="关闭"><svg viewBox="0 0 10 10"><path d="M2 2l6 6M8 2L2 8" stroke="#445" stroke-width="3"/><path d="M2 2l6 6M8 2L2 8" stroke="#fff"/></svg></button></header>
      <div class="body">
        <div class="media">
          <button aria-label="停止"><svg viewBox="0 0 13 16"><path d="M0 3h12v11H0z" fill="#a0a0a0"/></svg></button>
          <button aria-label="暂停"><svg viewBox="0 0 13 16"><path d="M0 3h5v11H0zM7 3h5v11H7z" fill="#a0a0a0"/></svg></button>
          <button aria-label="播放"><svg viewBox="0 0 13 16"><path d="M0 2l12 6.500L0 15z" fill="#a0a0a0"/></svg></button>
          <button aria-label="优先"><svg viewBox="0 0 13 16"><path d="M3 2q3-3 5 0l-1 8H5z" fill="#ccc" stroke="#888"/><path d="M6 2l2 0-1 7z" fill="#888"/><circle cx="6" cy="13.500" r="1.500" fill="none" stroke="#888"/></svg></button>
        </div>
        <div class="list"><table>
          <thead><tr><th class="c1">操作名称</th><th class="c2">状态</th><th class="c3">进度</th><th>状态</th></tr></thead>
          <tbody><tr><td>1 - 曲面高速...</td><td>正在处理中</td><td class="pr"><i class="bar"></i></td><td>2...正在处理刀路... 60%</td></tr>
          <tr><td></td><td></td><td></td><td></td></tr><tr><td></td><td></td><td></td><td></td></tr><tr><td></td><td></td><td></td><td></td></tr><tr><td></td><td></td><td></td><td></td></tr></tbody>
        </table></div>
        <footer>
          <button class="win" aria-label="确定"><svg viewBox="0 0 18 20"><path d="M1 10q3-4 5 2Q10 4 17 0 10 8 7 19z" fill="#3fc01d" stroke="#1c7a10"/></svg></button>
          <button class="win" aria-label="帮助"><svg viewBox="0 0 18 20"><path d="M4 6q0-4 5-4t5 4-5 5v3" fill="none" stroke="#4a4a5c" stroke-width="4.500"/><path d="M4 6q0-4 5-4t5 4-5 5v3" fill="none" stroke="#d8d8e6" stroke-width="2"/><circle cx="9" cy="18" r="2" fill="#d8d8e6" stroke="#4a4a5c"/></svg></button>
        </footer>
        <svg class="grip" viewBox="0 0 12 12"><path d="M0 12L12 0M4 12l8-8M8 12l4-4" stroke="#999"/></svg>
      </div>
    </div>

    <div class="tm" role="dialog" aria-label="Windows 任务管理器">
      <header>
        <svg class="ico" viewBox="0 0 16 16"><path d="M0 6h3v8H0z" fill="#ccc"/><path d="M0 6v8" stroke="#080"/><path d="M4 1h12v10H4z" fill="#d4d4d0"/><path d="M5 2h10v8H5z" fill="#111"/><path d="M5 7l3-3 2 3 2-2h3" fill="none" stroke="#0c0"/><path d="M8 11h4v2h2v2H6v-2h2z" fill="#ccc"/></svg>
        <h3>Windows 任务管理器</h3>
        <button aria-label="最小化"><svg viewBox="0 0 14 10"><path d="M2.500 5.500h9v3h-9z" fill="#fff" stroke="#445"/></svg></button>
        <button aria-label="最大化"><svg viewBox="0 0 14 10"><path d="M2.500.5h9v8h-9z" fill="#fff" stroke="#445"/><path d="M5.500 3.500h3v2h-3z" fill="#9ab" stroke="#445"/></svg></button>
        <button class="close" aria-label="关闭"><svg viewBox="0 0 14 10"><path d="M3 1l8 8M11 1L3 9" stroke="#533" stroke-width="4"/><path d="M3 1l8 8M11 1L3 9" stroke="#fff" stroke-width="2.500"/></svg></button>
      </header>
      <div class="client">
        <nav class="menu"><button>文件(F)</button><button>选项(O)</button><button>查看(V)</button><button>帮助(H)</button></nav>
        <div class="tmtabs"><button class="w60">应用程序</button><button class="w48">进程</button><button class="w58">服务</button><button class="cur">性能</button><button class="w47">联网</button><button class="w46">用户</button></div>
        <div class="pane">
          <div class="pair">
            <fieldset class="meter"><legend><span class="m">CPU</span> 使用率</legend>
              <svg><path d="M18 4h16v44H18zM35 4h16v44H35z" fill="url(#dots)"/><path d="M18 48h16v9H18zM35 48h16v9H35z" fill="url(#bars)"/><text x="24" y="71">16 %</text></svg></fieldset>
            <fieldset class="hist"><legend><span class="m">CPU</span> 使用记录</legend><div class="graphs">
              <svg><rect width="100%" height="100%" fill="url(#grid)"/><path d="M1 76h7l2-3 2 3h5l1-3 2 3h7l1-3 2 3h9"/></svg>
              <svg><rect width="100%" height="100%" fill="url(#grid)"/><path d="M1 5L3 62 4 75 6 70 9 76 11 15 15 1 16 35 18 76 22 74 24 76 29 73 31 76 33 72 36 40 38 3 39 62 40 76"/></svg>
              <svg><rect width="100%" height="100%" fill="url(#grid)"/><path d="M1 76L4 62 7 1h3l1 69 3 6 2-36 2-33h4l1 53 1 10 2-62 3-7 2 5 2-5h3l1 39 1 34"/></svg>
              <svg><rect width="100%" height="100%" fill="url(#grid)"/><path d="M1 73l2 3h5l2-5 2 5h7l2-3 2 3h7l1-3 2 3h6"/></svg>
              <svg><rect width="100%" height="100%" fill="url(#grid)"/><path d="M1 73l2 3h9l2-3 2 3h4L23 40l3 36h4l4-18 5 15"/></svg>
              <svg><rect width="100%" height="100%" fill="url(#grid)"/><path d="M1 76h7l2-4 2 4h7l2-3 2 3h7l1-3 2 3h6"/></svg>
              <svg><rect width="100%" height="100%" fill="url(#grid)"/><path d="M1 76L3 0l3 72 3 4 4-6 2 5 3-5 3 6 2-41 3 38 2 3 4-14 3 7 3 7"/></svg>
              <svg><rect width="100%" height="100%" fill="url(#grid)"/><path d="M1 76h8l2-5 2 4 4-2 2 3h4l2-6 2 6h7l2-3 2 3"/></svg>
            </div></fieldset>
          </div>
          <div class="pair">
            <fieldset class="meter"><legend>内存</legend>
              <svg><path d="M18 4h16v44H18zM35 4h16v44H35z" fill="url(#dots)"/><path d="M18 48h16v9H18zM35 48h16v9H35z" fill="url(#bars)"/><text x="14" y="71">2.95 GB</text></svg></fieldset>
            <fieldset class="hist"><legend>物理内存使用记录</legend><div class="graphs"><svg class="wide"><rect width="100%" height="100%" fill="url(#grid)"/><path d="M47 65h13l2 1h6l2-1h12l2 1h4l2-1h124l8-2 4 2h8l4-1 8 1 4-2h98l4 1h8"/></svg></div></fieldset>
          </div>
          <div class="stats">
            <div>
              <fieldset><legend>物理内存<span class="m">(MB)</span></legend><dl><dt>总数</dt><dd>16318</dd><dt>已缓存</dt><dd>1505</dd><dt>可用</dt><dd>13289</dd><dt>空闲</dt><dd>11788</dd></dl></fieldset>
              <fieldset><legend>核心内存<span class="m">(MB)</span></legend><dl><dt>分页数</dt><dd>198</dd><dt>未分页</dt><dd>69</dd></dl></fieldset>
            </div>
            <div class="sys">
              <fieldset><legend>系统</legend><dl><dt>句柄数</dt><dd>13062</dd><dt>线程数</dt><dd>551</dd><dt>进程数</dt><dd>39</dd><dt>开机时间</dt><dd>0:01:02:15</dd><dt>提交<span class="m">(GB)</span></dt><dd>4 / 15</dd></dl></fieldset>
              <button class="win">资源监视器<span class="m">(R)...</span></button>
            </div>
          </div>
        </div>
        <footer class="status"><span class="s1">进程数: 39</span><span class="s2">CPU 使用率: 16%</span><span class="s3">物理内存: 18%</span><span class="s4"><svg viewBox="0 0 10 10"><path d="M8 1h2M5 5h2M8 5h2M2 9h2M5 9h2M8 9h2" stroke="#aaa" stroke-width="2"/></svg></span></footer>
      </div>
    </div>
  </section>
</main>
</body>
</html>
```
FILE: styles.css
```css
* { box-sizing: border-box; }
body { margin: 0; height: 100vh; display: flex; flex-direction: column; overflow: hidden; background: #fff; color: #333; font: 11px/16px "Noto Sans", "Noto Sans CJK SC", sans-serif; }
button { font: inherit; color: inherit; border: 0; background: none; padding: 0; margin: 0; flex: none; }
h1, h2, h3 { margin: 0; font-weight: normal; }
svg { display: block; flex: none; }
.defs { position: absolute; width: 0; height: 0; }
.caret { width: 0; height: 0; flex: none; border: 3px solid transparent; border-top: 4px solid #777; border-bottom: 0; }

/* title bar and tabs */
.titlebar { display: flex; height: 26px; flex: none; }
.doc { width: 504px; font: 12px/24px Roboto, "Noto Sans CJK SC", sans-serif; white-space: nowrap; flex: none; }
.context { width: 50px; background: #fbf1f2; border-top: 4px solid #d13438; color: #6e2029; text-align: center; line-height: 16px; }
.winbtns { margin-left: auto; display: flex; gap: 25px; padding: 5px 7px 0 0; align-items: flex-start; }
.winbtns svg { width: 10px; height: 10px; }
.tabs { display: flex; height: 29px; flex: none; border-bottom: 1px solid #d0d0d0; }
.tabs button { width: 50px; height: 28px; }
.tabs .file { width: 51px; margin-right: 3px; background: #0a7565; color: #fff; }
.tabs .active { height: 29px; border: 1px solid #d0d0d0; border-bottom: 0; background: #fff; color: #6e2029; }
.tabs .my { margin-left: auto; line-height: 29px; color: #444; text-decoration: none; }
.tabs .helpbtn { width: 16px; margin-left: 10px; }
.tabs .fold { width: 17px; padding-left: 7px; }
.tabs .helpbtn svg { width: 16px; height: 16px; }
.tabs .fold svg { width: 10px; height: 10px; }

/* ribbon */
.ribbon { display: flex; height: 100px; flex: none; padding-top: 2px; border-bottom: 1px solid #d0d0d0; }
.group { display: flex; flex-direction: column; height: 95px; border-right: 1px solid #d4d4d4; padding: 0 5px; text-align: center; white-space: nowrap; }
.gal { width: 319px; padding: 5px 7px 0 6px; flex: none; }
.gal:first-child { margin-left: -3px; }
.gal + .gal { width: 320px; padding-right: 8px; }
.cap { margin-top: auto; line-height: 16px; padding-bottom: 3px; }
.gallery { display: flex; border: 1px solid #e6e6e6; height: 66px; }
.gallery > button { width: 72px; display: flex; flex-direction: column; align-items: center; gap: 5px; padding-top: 6px; }
.gallery > button svg { width: 30px; height: 30px; }
.scroll { display: flex; flex-direction: column; flex: 1; border-left: 1px solid #e6e6e6; }
.scroll button { flex: 1; border-bottom: 1px solid #e6e6e6; display: flex; flex-direction: column; align-items: center; justify-content: center; }
.scroll button:last-child { border-bottom: 0; }
.scroll .up .caret { border-top: 0; border-bottom: 4px solid #bbb; }
.more::before { content: ""; width: 6px; height: 1px; background: #777; margin-bottom: 2px; }
.bigs { display: flex; padding-top: 2px; }
.bigs > button { width: 48px; height: 70px; display: flex; flex-direction: column; align-items: center; gap: 5px; padding-top: 3px; }
.bigs > button svg { width: 30px; height: 31px; }
.bigs > .w70 { width: 70px; }
.bigs > .w75 { width: 75px; }
.bigs > .w50 { width: 50px; }
.bigs > .w42 { width: 42px; }
.bigs .on { background: #98f0e3; }
.stack { width: 80px; padding-left: 4px; }
.stack button { display: flex; align-items: center; height: 22px; gap: 3px; }
.stack svg { width: 16px; height: 16px; }
.stack button:disabled { color: #a0a0a0; }

/* quick toolbar */
.quick { display: flex; align-items: center; height: 38px; flex: none; padding-bottom: 4px; margin-left: -5px; }
.quick button { width: 24px; display: flex; align-items: center; justify-content: center; }
.quick svg { width: 16px; height: 16px; }
.quick .dd { width: 35px; justify-content: flex-start; padding-left: 4px; gap: 5px; }
.quick .combo { width: 56px; height: 22px; border: 1px solid #a8a8a8; justify-content: space-between; padding: 0 4px 0 1px; margin-right: 2px; }
.quick .more { flex-direction: column; }
.thick, .thin { width: 38px; height: 2px; background: #000; }
.thin { height: 1px; }
.dsep { width: 6px; height: 24px; flex: none; border: 1px solid #d4d4d4; border-width: 0 1px; margin: 0 3px; }

/* left panel */
.work { display: flex; flex: 1; min-height: 0; }
.panel { width: 402px; flex: none; display: flex; flex-direction: column; border-right: 4px solid #f4f4f4; padding-right: 4px; }
.panel > header { display: flex; align-items: center; height: 35px; padding-right: 4px; gap: 9px; }
.panel h2 { font-size: 18px; line-height: 32px; height: 35px; margin-right: auto; margin-left: -1px; color: #444; }
.panel header svg { width: 10px; height: 10px; }
.ptools { display: flex; align-items: center; height: 24px; margin-left: -3px; opacity: .55; }
.ptools button { width: 22px; display: flex; justify-content: center; align-items: center; }
.ptools svg { width: 16px; height: 16px; }
.ptools .dd { width: 34px; gap: 4px; }
.ptools .boxed { border: 1px solid #ccc; height: 20px; }
.ptools .gcode { color: #2f66a5; }
.sep { width: 1px; height: 21px; background: #999; margin: 0 4px 0 3px; flex: none; }
.treebox { flex: 1; display: flex; flex-direction: column; border: 1px solid #c8c8c8; border-left: 0; margin: 6px 0 11px; color: #000; font-size: 12px; min-height: 0; }
.tree, .tree ul { list-style: none; margin: 0; padding: 0; }
.tree { flex: 1; padding-top: 1px; overflow: hidden; }
.tree ul { padding-left: 19px; }
.tree li { position: relative; }
.tree ul > li::before { content: ""; position: absolute; left: 9px; top: 0; bottom: 0; border-left: 1px dotted #333; }
.tree ul > li:last-child::before { bottom: auto; height: 8px; }
.row { display: flex; align-items: center; height: 16px; white-space: nowrap; position: relative; padding-left: 5px; }
.row::before { content: ""; position: absolute; left: 10px; width: 10px; top: 8px; border-top: 1px dotted #333; }
.row svg { width: 16px; height: 16px; margin-right: 2px; }
.leaf { padding-left: 20px; }
.row span { padding-left: 2px; }
.row .lat { font: 11px/16px Roboto, "Noto Sans CJK SC", sans-serif; }
.row em { font-style: normal; font-size: 12px; }
.row .sel { background: #cdfcf5; flex: 1; padding-left: 4px; margin-left: -2px; }
.ex { width: 9px; height: 9px; border: 1px solid #999; background: #fff; border-radius: 1px; color: #336; font: bold 9px/7px "Liberation Sans", sans-serif; text-align: center; margin-right: 6px; position: relative; flex: none; }
.hscroll { display: flex; height: 17px; background: #eee; }
.hscroll button { width: 15px; border: 1px solid #ccc; background: #fff; display: flex; align-items: center; justify-content: center; }
.hscroll svg { width: 8px; height: 8px; }
.thumb { flex: 290; background: #fff; border: 1px solid #ccc; }
.track { flex: 70; }

/* graphics view and its windows */
.view { flex: 1; position: relative; overflow: hidden; background: linear-gradient(#939ea8, #c2c7cc 50%, #fdfdfd); }
.scene { position: absolute; inset: 0; width: 100%; height: 100%; }
.axis { font: bold 12px "Noto Sans", sans-serif; }
.vname { font: bold 13px "Noto Sans CJK SC", sans-serif; }

.dlg { position: absolute; left: 74px; top: 163px; width: 634px; border: 1px solid #4c5660; background: #d8e4f1; padding: 0 7px 7px; box-shadow: inset 0 0 0 1px #f4f8fc; }
.dlg header { display: flex; align-items: center; justify-content: space-between; height: 27px; margin: 1px -6px 0; padding: 8px 8px 0 6px; background: linear-gradient(#c0cddb, #d6e2ef); border-bottom: 1px solid #98a4b0; color: #444; }
.dlg h3 { font-size: 12px; line-height: 16px; }
.dlg .x { width: 15px; height: 15px; border: 1px solid #6a7c94; border-radius: 2px; padding: 2px; }
.dlg .x svg { width: 9px; height: 9px; }
.dlg .body { background: #f0f0f0; height: 207px; padding: 8px 15px 0 9px; position: relative; color: #000; }
.media { display: flex; gap: 10px; padding-left: 2px; height: 33px; }
.media svg { width: 13px; height: 16px; }
.media button { height: 16px; }
.list { border: 1px solid #828790; background: #fff; height: 122px; overflow: hidden; padding: 1px 1px 0; }
.list table { width: 100%; border-collapse: collapse; table-layout: fixed; font-size: 12px; line-height: 16px; }
.list th { font-weight: normal; text-align: left; height: 23px; padding: 3px 4px 0; border-right: 1px solid #e0e3e6; border-bottom: 1px solid #d5d5d5; background: linear-gradient(#fff 40%, #f1f2f4); }
.list td { height: 21px; padding: 2px 5px 0; border-right: 1px solid #eee; border-bottom: 1px solid #eee; white-space: nowrap; }
.list .c1 { width: 90px; } .list .c2 { width: 80px; } .list .c3 { width: 100px; }
.list .pr { padding: 0 5px; }
.list td:last-child { border-right: 0; }
.bar { display: block; width: 53px; height: 20px; background: linear-gradient(90deg, #0f0, #060); }
.dlg footer { display: flex; justify-content: flex-end; gap: 3px; padding: 7px 4px 0 0; }
.win { border: 1px solid #707070; border-radius: 3px; background: linear-gradient(#f3f3f3, #ebebeb 49%, #dcdcdc 51%, #cfcfcf); box-shadow: inset 0 0 0 1px #fbfbfb; }
.dlg .win { width: 52px; height: 27px; display: flex; align-items: center; justify-content: center; }
.dlg .win svg { width: 18px; height: 20px; }
.grip { position: absolute; right: 0; bottom: 0; width: 12px; height: 12px; }

.tm { position: absolute; left: 939px; top: 316px; width: 545px; border: 1px solid #111; border-radius: 6px 6px 0 0; background: #b9d1ea; padding: 0 6px 7px; color: #000; font-size: 12px; box-shadow: inset -1px -1px #35c5e0, inset 1px 1px #e8f2fb; }
.tm > header { display: flex; align-items: center; gap: 3px; height: 28px; margin: 1px -5px 0; padding: 7px 8px 3px 9px; border-radius: 5px 5px 0 0; background: linear-gradient(#9bb5d3, #b9d1ea); }
.tm .ico { width: 16px; height: 16px; }
.tm h3 { font: 13px/18px Roboto, "Noto Sans CJK SC", sans-serif; font-size: 12px; margin-right: auto; }
.tm > header button { width: 30px; height: 17px; border: 1px solid #56698a; border-radius: 3px; background: linear-gradient(#c7d7ea, #a3bbd6 50%, #b4cae2); box-shadow: inset 0 0 0 1px #dfe9f4; display: flex; align-items: center; justify-content: center; }
.tm > header .close { border-color: #5a1c14; background: linear-gradient(#e09a8c, #c0412a 50%, #d0604a); box-shadow: inset 0 0 0 1px #eab5a8; }
.tm > header button svg { width: 14px; height: 10px; }
.client { background: #f0f0f0; border: 1px solid #fff; }
.menu { display: flex; gap: 15px; height: 18px; padding-left: 6px; background: linear-gradient(#fff, #d5dcee 50%, #e2e8f6); border-bottom: 1px solid #b8bfcc; }
.tmtabs { display: flex; align-items: flex-end; height: 28px; padding-left: 6px; margin-bottom: -1px; position: relative; }
.tmtabs button { height: 19px; border: 1px solid #898c95; background: linear-gradient(#f3f3f3, #ebebeb 50%, #dcdcdc 51%, #cfcfcf); text-align: left; padding-left: 5px; margin-right: -1px; line-height: 17px; }
.tmtabs .w60 { width: 61px; } .tmtabs .w48 { width: 49px; } .tmtabs .w58 { width: 59px; } .tmtabs .w47 { width: 48px; } .tmtabs .w46 { width: 47px; }
.tmtabs .cur { width: 52px; height: 22px; background: #fff; border-bottom: 0; padding-left: 7px; }
.pane { margin: 0 6px 6px 5px; border: 1px solid #898c95; background: #fff; height: 367px; padding: 7px 14px 0 15px; display: flex; flex-direction: column; gap: 5px; line-height: 14px; }
.pair { display: flex; gap: 15px; }
fieldset { margin: 0; border: 1px solid #d5dfe5; border-radius: 4px; padding: 3px 7px 7px; min-width: 0; }
legend { padding: 0 2px; line-height: 14px; height: 14px; margin-left: -2px; }
.m { font: 10px/12px "Liberation Mono", monospace; }
.meter { width: 90px; }
.hist { flex: 1; }
.meter > svg { width: 72px; height: 78px; background: #000; border: 1px solid #808080; border-right-color: #eee; border-bottom-color: #eee; }
.meter text { font: 10px "Liberation Mono", monospace; fill: #0f0; }
.graphs { display: flex; gap: 5px; }
.graphs svg { width: 41px; height: 78px; background: #000; border: 1px solid #808080; border-right-color: #eee; border-bottom-color: #eee; }
.graphs path { fill: none; stroke: #0f0; }
.graphs .wide { flex: 1; }
.graphs .wide path { stroke: #0080ff; stroke-width: 2; }
.stats { display: flex; gap: 13px; padding-top: 1px; }
.stats > div { width: 170px; display: flex; flex-direction: column; gap: 6px; }
.stats fieldset { padding: 1px 7px 4px; }
dl { display: grid; grid-template-columns: 1fr auto; margin: 0; line-height: 13px; }
dt { white-space: nowrap; height: 13px; }
dd { margin: 0; text-align: right; height: 13px; font: 10px/13px "Liberation Mono", monospace; }
.stats .sys { gap: 15px; }
.stats .sys fieldset { padding-bottom: 7px; }
.sys .win { height: 19px; line-height: 16px; color: #000; }
.status { display: flex; height: 21px; border-top: 1px solid #a0a0a0; background: #f1edec; line-height: 19px; }
.status span { padding-left: 4px; border-right: 1px solid #ddd; }
.status .s1 { width: 104px; padding-left: 1px; } .status .s2 { width: 131px; } .status .s3 { flex: 1; } .status .s4 { width: 31px; border: 0; }
.status svg { width: 10px; height: 10px; margin: 9px 0 0 15px; }
```
